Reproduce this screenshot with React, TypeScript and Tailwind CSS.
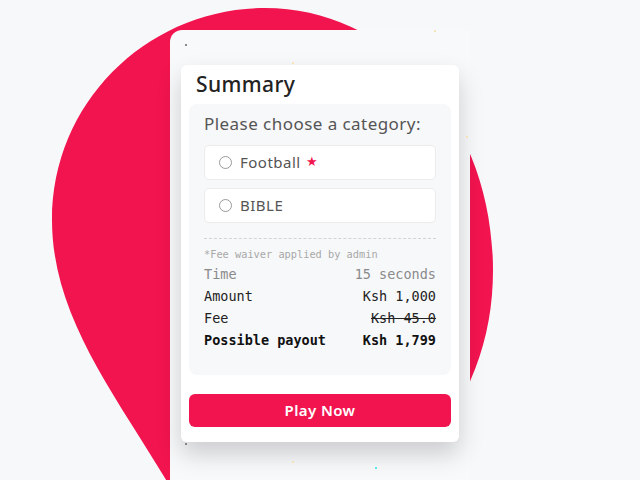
const display = '"Noto Sans", "Open Sans", sans-serif';
const mono = '"DejaVu Sans Mono", "Liberation Mono", monospace';

const rows = [
  { label: 'Time', value: '15 seconds', tone: 'text-[#8a8a8a]' },
  { label: 'Amount', value: 'Ksh 1,000', tone: 'text-[#222]' },
  { label: 'Fee', value: 'Ksh 45.0', tone: 'text-[#222]', struck: true },
  { label: 'Possible payout', value: 'Ksh 1,799', tone: 'text-[#111] font-bold' }
];

function Pin() {
  return (
    <svg className="absolute inset-0" width="640" height="480" viewBox="0 0 640 480" aria-hidden="true">
      <path
        d="M175 495 C120 400 52 320 52 220 C52 100 150 8 265 8 C390 8 493 120 493 270 C493 340 470 400 420 460 Z"
        fill="#f1144f"
      />
    </svg>
  );
}

function Dots() {
  return (
    <>
      <span className="absolute left-[185px] top-[44px] h-[2px] w-[2px] rounded-full bg-[#666]" />
      <span className="absolute left-[185px] top-[443px] h-[2px] w-[2px] rounded-full bg-[#666]" />
      <span className="absolute left-[292px] top-[62px] h-[2px] w-[2px] rounded-full bg-[#f5dfa0]" />
      <span className="absolute left-[434px] top-[30px] h-[2px] w-[2px] rounded-full bg-[#f5dfa0]" />
      <span className="absolute left-[466px] top-[136px] h-[2px] w-[2px] rounded-full bg-[#f5dfa0]" />
      <span className="absolute left-[292px] top-[461px] h-[2px] w-[2px] rounded-full bg-[#f5dfa0]" />
      <span className="absolute left-[375px] top-[467px] h-[2px] w-[2px] rounded-full bg-[#2ee6e6]" />
    </>
  );
}

function Option({ label, starred }: { label: string; starred?: boolean }) {
  return (
    <div className="flex h-[35px] items-center gap-[8px] rounded-[5px] border border-[#ececec] bg-white pl-[14px]">
      <span className="h-[13px] w-[13px] rounded-full border-[1.5px] border-[#9a9a9a]" />
      <span className="text-[15px] tracking-[0.5px] text-[#555]" style={{ fontFamily: display }}>
        {label}
      </span>
      {starred && <span className="ml-[-3px] text-[13px] text-[#f1144f]">★</span>}
    </div>
  );
}

export default function App() {
  return (
    <div className="relative h-[480px] w-[640px] overflow-hidden bg-[#f7f8fa]">
      <Pin />
      <div className="relative pl-[170px] pt-[30px]">
        <div className="h-[460px] w-[300px] rounded-tl-[12px] bg-[#f8f9fb] px-[11px] pt-[35px]">
          <div className="flex flex-col rounded-[6px] bg-white px-[8px] pb-[15px] shadow-[0_12px_24px_rgba(0,0,0,0.18)]">
            <h1
              className="flex h-[39px] items-center pl-[7px] text-[21px] font-medium tracking-[0.4px] text-[#222]"
              style={{ fontFamily: display }}
            >
              Summary
            </h1>

            <div className="flex h-[271px] flex-col rounded-[8px] bg-[#f7f8fa] px-[15px]">
              <p className="mt-[7px] text-[17px] tracking-[0.45px] text-[#555]" style={{ fontFamily: display }}>
                Please choose a category:
              </p>

              <div className="mt-[8px] flex flex-col gap-[8px]">
                <Option label="Football" starred />
                <Option label="BIBLE" />
              </div>

              <div className="mt-[15px] border-t border-dashed border-[#d4d4d4]" />

              <p className="mt-[8px] text-[10.3px] text-[#a8a8a8]" style={{ fontFamily: mono }}>
                *Fee waiver applied by admin
              </p>

              <div className="mt-[1px] flex flex-col" style={{ fontFamily: mono }}>
                {rows.map((row) => (
                  <div key={row.label} className={`flex h-[22px] items-center justify-between text-[13.5px] ${row.tone}`}>
                    <span>{row.label}</span>
                    <span className={row.struck ? 'line-through' : ''}>{row.value}</span>
                  </div>
                ))}
              </div>
            </div>

            <button
              type="button"
              className="mt-[19px] h-[33px] rounded-[6px] bg-[#f1144f] text-[15px] font-semibold tracking-[0.4px] text-white"
              style={{ fontFamily: display }}
            >
              Play Now
            </button>
          </div>
        </div>
      </div>
      <Dots />
    </div>
  );
}
